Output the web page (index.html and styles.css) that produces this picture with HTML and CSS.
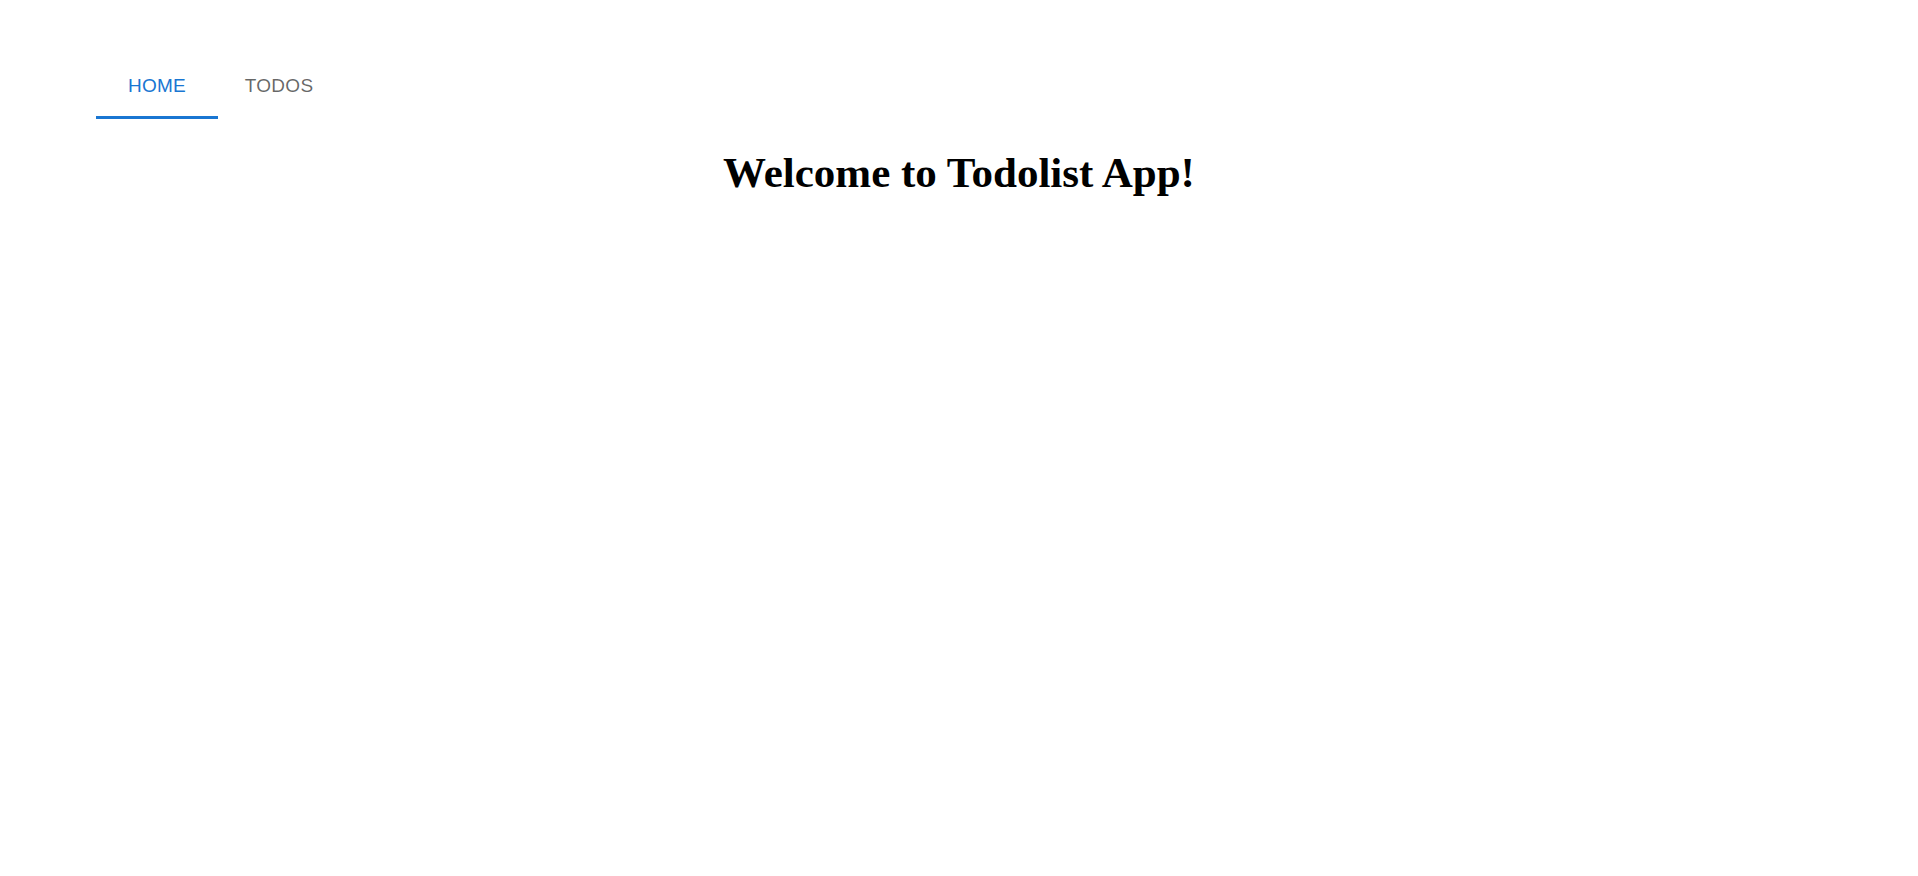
FILE: index.html
```html
<!DOCTYPE html>
<html>
<head>
<meta charset="utf-8">
<title>Todolist App</title>
<link rel="stylesheet" href="styles.css">
</head>
<body>
<nav class="tabs">
  <a class="tab tab-active">HOME</a>
  <a class="tab">TODOS</a>
</nav>
<h1 class="title">Welcome to Todolist App!</h1>
</body>
</html>
```
FILE: styles.css
```css
html, body {
  margin: 0;
  padding: 0;
  background: #ffffff;
}
.tabs {
  display: flex;
  padding: 54px 0 0 96px;
}
.tab {
  box-sizing: border-box;
  min-width: 122px;
  height: 65px;
  padding: 2px 22px 0;
  display: flex;
  align-items: center;
  justify-content: center;
  font-family: "Liberation Sans", Arial, sans-serif;
  font-size: 19px;
  letter-spacing: 0.3px;
  color: rgba(0, 0, 0, 0.6);
  border-bottom: 3px solid transparent;
  cursor: pointer;
}
.tab-active {
  color: #1976d2;
  border-bottom-color: #1976d2;
}
.title {
  margin: 29px 0 0;
  text-align: center;
  font-family: "Liberation Serif", "Times New Roman", serif;
  font-weight: bold;
  font-size: 43px;
  color: #000;
}
```
